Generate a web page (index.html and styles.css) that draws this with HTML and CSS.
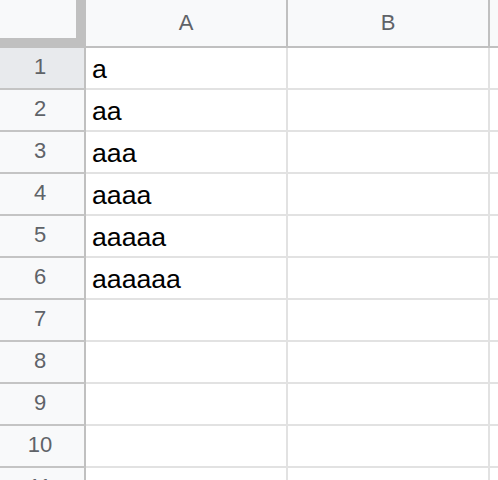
FILE: index.html
```html
<!DOCTYPE html>
<html>
<head>
<meta charset="utf-8">
<link rel="stylesheet" href="styles.css">
</head>
<body>
<div class="sheet">
  <div class="corner"></div>
  <div class="colhead">A</div>
  <div class="colhead">B</div>
  <div class="colhead"></div>

  <div class="rowhead active">1</div><div class="cell">a</div><div class="cell"></div><div class="cell"></div>
  <div class="rowhead">2</div><div class="cell">aa</div><div class="cell"></div><div class="cell"></div>
  <div class="rowhead">3</div><div class="cell">aaa</div><div class="cell"></div><div class="cell"></div>
  <div class="rowhead">4</div><div class="cell">aaaa</div><div class="cell"></div><div class="cell"></div>
  <div class="rowhead">5</div><div class="cell">aaaaa</div><div class="cell"></div><div class="cell"></div>
  <div class="rowhead">6</div><div class="cell">aaaaaa</div><div class="cell"></div><div class="cell"></div>
  <div class="rowhead">7</div><div class="cell"></div><div class="cell"></div><div class="cell"></div>
  <div class="rowhead">8</div><div class="cell"></div><div class="cell"></div><div class="cell"></div>
  <div class="rowhead">9</div><div class="cell"></div><div class="cell"></div><div class="cell"></div>
  <div class="rowhead">10</div><div class="cell"></div><div class="cell"></div><div class="cell"></div>
  <div class="rowhead">11</div><div class="cell"></div><div class="cell"></div><div class="cell"></div>
</div>
</body>
</html>
```
FILE: styles.css
```css
html, body {
  margin: 0;
  padding: 0;
  background: #ffffff;
  overflow: hidden;
}
body {
  width: 498px;
  height: 480px;
}
.sheet {
  display: grid;
  grid-template-columns: 86px 202px 202px 202px;
  grid-template-rows: 48px;
  grid-auto-rows: 42px;
  font-family: "Liberation Sans", Arial, sans-serif;
}
.sheet > div {
  box-sizing: border-box;
}
.corner {
  background: #f8f9fa;
  border-right: 10px solid #c0c0c0;
  border-bottom: 10px solid #c0c0c0;
}
.colhead {
  background: #f8f9fa;
  border-right: 2px solid #c0c0c0;
  border-bottom: 2px solid #c0c0c0;
  color: #5f6368;
  font-size: 22px;
  display: flex;
  align-items: center;
  justify-content: center;
}
.rowhead {
  background: #f8f9fa;
  border-right: 2px solid #c0c0c0;
  border-bottom: 2px solid #c4c4c4;
  color: #5f6368;
  font-size: 22px;
  display: flex;
  align-items: center;
  justify-content: center;
  padding: 0 4px 2px 0;
}
.rowhead.active {
  background: #e8eaed;
}
.cell {
  border-right: 2px solid #e2e2e2;
  border-bottom: 2px solid #e2e2e2;
  color: #000000;
  font-size: 26.67px;
  line-height: 30px;
  display: flex;
  align-items: flex-end;
  padding: 0 0 4px 6px;
  white-space: nowrap;
}
```
